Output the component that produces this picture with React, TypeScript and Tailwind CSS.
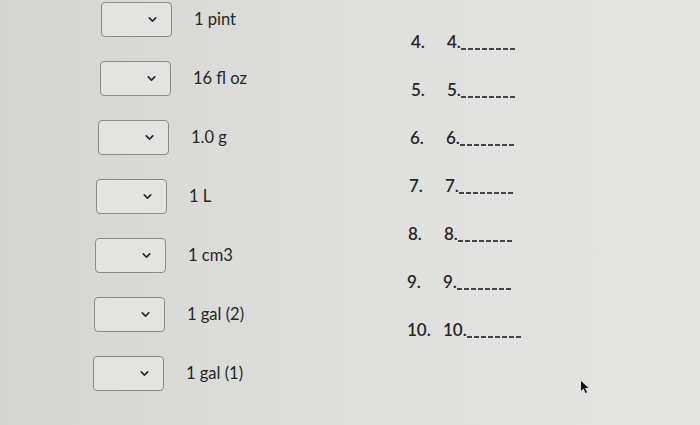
import { ChevronDown } from "lucide-react";

const UNITS = [
  { label: "1 pint", pad: "pl-[101px]" },
  { label: "16 fl oz", pad: "pl-[100px]" },
  { label: "1.0 g", pad: "pl-[98px]" },
  { label: "1 L", pad: "pl-[96px]" },
  { label: "1 cm3", pad: "pl-[95px]" },
  { label: "1 gal (2)", pad: "pl-[94px]" },
  { label: "1 gal (1)", pad: "pl-[93px]" },
];

const ANSWERS = [
  { n: "4.", pad: "pl-[411px]" },
  { n: "5.", pad: "pl-[411px]" },
  { n: "6.", pad: "pl-[410px]" },
  { n: "7.", pad: "pl-[409px]" },
  { n: "8.", pad: "pl-[408px]" },
  { n: "9.", pad: "pl-[407px]" },
  { n: "10.", pad: "pl-[407px]" },
];

function Cursor() {
  return (
    <svg
      className="absolute left-[580px] top-[380px]"
      width="10"
      height="14"
      viewBox="0 0 10 14"
    >
      <path d="M1 1 L1 11 L3.5 8.5 L5.5 13 L7 12.3 L5 8 L8.5 8 Z" fill="#111" />
    </svg>
  );
}

export default function App() {
  return (
    <div className="relative h-[425px] w-[700px] overflow-hidden bg-gradient-to-r from-[#d5d5d3] via-[#dfdfdd] to-[#e4e4e2] font-['Lato','Liberation_Sans',sans-serif] text-[#262626]">
      <div className="flex h-full">
        {/* Left column: dropdown + unit */}
        <div className="flex w-[400px] shrink-0 flex-col gap-[24px] pt-[2px]">
          {UNITS.map(({ label, pad }) => (
            <div key={label} className={`flex h-[35px] items-center ${pad}`}>
              <div className="flex h-[35px] w-[71px] items-center justify-end rounded-[4px] border-[1.5px] border-[#8c8c8a] bg-[#e3e3e1] pr-[12px]">
                <ChevronDown size={13} strokeWidth={3} className="text-[#2a2a2a]" />
              </div>
              <span className="ml-[22px] text-[16.5px]">{label}</span>
            </div>
          ))}
        </div>

        {/* Right column: numbered answers */}
        <div className="flex flex-col gap-[24px] pt-[30px]">
          {ANSWERS.map(({ n, pad }) => (
            <div
              key={n}
              className={`-ml-[400px] flex h-[24px] items-center text-[17px] font-semibold ${pad}`}
            >
              <span className="w-[36px]">{n}</span>
              <span>{n}</span>
              <span className="mt-[14px] h-[1.5px] w-[56px] bg-[repeating-linear-gradient(90deg,#444_0_5px,transparent_5px_7px)]" />
            </div>
          ))}
        </div>
      </div>
      <Cursor />
    </div>
  );
}
